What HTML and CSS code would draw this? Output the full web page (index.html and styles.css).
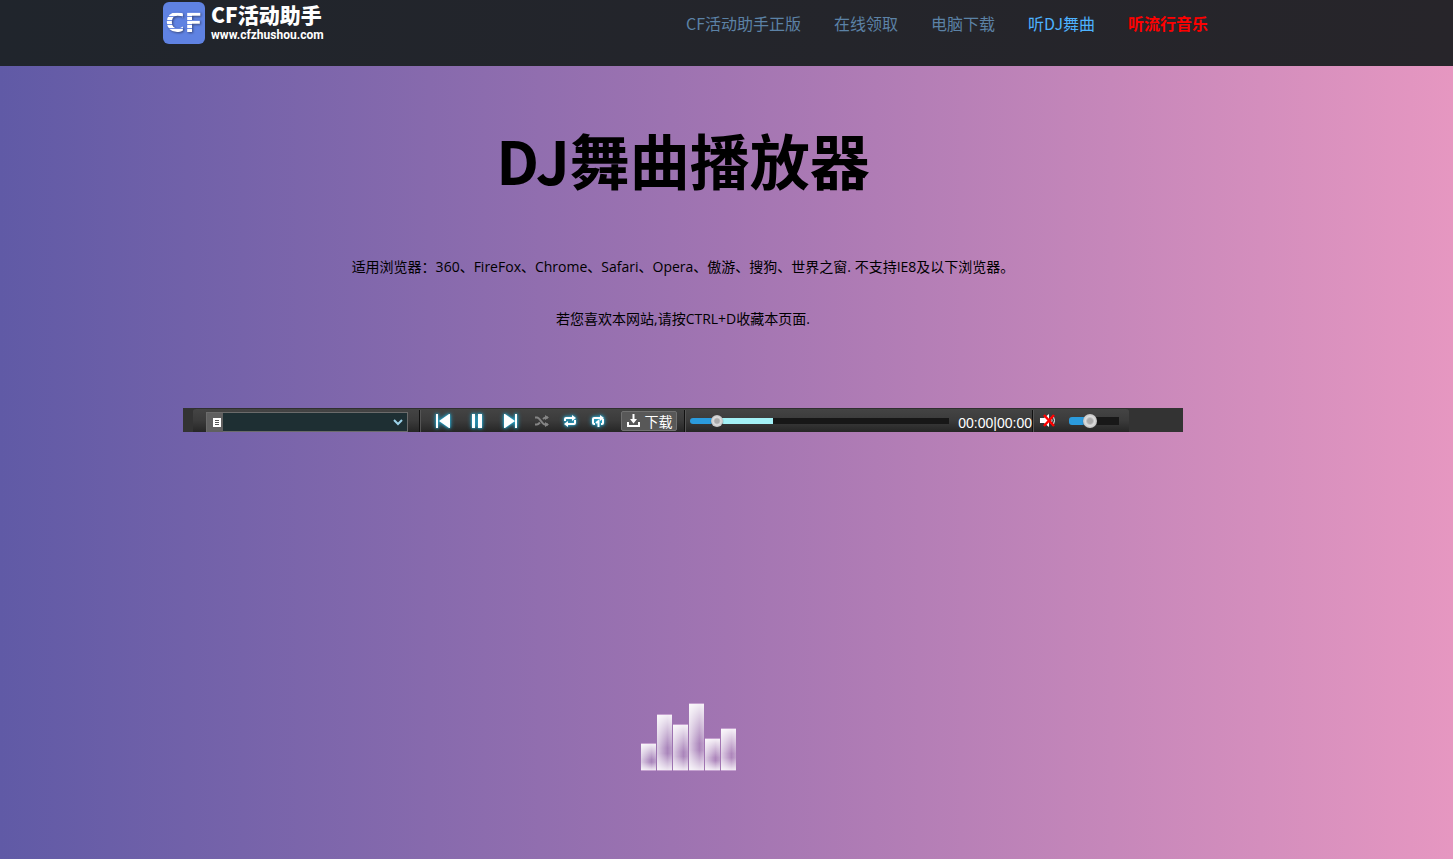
FILE: index.html
```html
<!DOCTYPE html>
<html lang="zh-CN">
<head>
<meta charset="utf-8">
<title>DJ舞曲播放器</title>
<link rel="stylesheet" href="styles.css">
</head>
<body>
<header class="header">
  <div class="header-inner">
    <a class="logo" href="#">
      <span class="logo-badge"><span class="logo-mark">CF</span></span>
      <span class="logo-words"><span class="logo-name">CF活动助手</span><span class="logo-url">www.cfzhushou.com</span></span>
    </a>
    <nav class="nav">
      <a href="#">CF活动助手正版</a>
      <a href="#">在线领取</a>
      <a href="#">电脑下载</a>
      <a href="#" class="active">听DJ舞曲</a>
      <a href="#" class="hot">听流行音乐</a>
    </nav>
  </div>
</header>
<main class="main">
  <h1 class="title">DJ舞曲播放器</h1>
  <p class="note">适用浏览器：360、FireFox、Chrome、Safari、Opera、傲游、搜狗、世界之窗. 不支持IE8及以下浏览器。</p>
  <p class="note">若您喜欢本网站,请按CTRL+D收藏本页面.</p>
  <section class="player" aria-label="播放器">
    <div class="player-bar">
      <div class="playlist">
        <svg class="list-icon" width="16" height="19" viewBox="0 0 16 19" aria-hidden="true"><path fill="#fff" d="M6 5h8v9H6z"/><path stroke="#555" d="M8 7.500h4M8 9.500h4M8 11.500h4"/></svg>
        <select class="playlist-select" aria-label="播放列表"><option></option></select>
        <svg class="chevron" width="10" height="7" viewBox="0 0 10 7" aria-hidden="true"><path d="M1 1l4 4 4-4" fill="none" stroke="#9cd3ea" stroke-width="2"/></svg>
      </div>
      <span class="divider"></span>
      <div class="controls">
        <button class="ctl" aria-label="上一首"><svg class="glow" width="16" height="16" viewBox="0 0 16 16"><path fill="#fff" d="M1 1h2v14H1zM15 1v14h-1L4 8l10-7z"/></svg></button>
        <button class="ctl" aria-label="暂停"><svg class="glow" width="16" height="16" viewBox="0 0 16 16"><path fill="#fff" d="M3 1h3v14H3zM9 1h4v14H9z"/></svg></button>
        <button class="ctl" aria-label="下一首"><svg class="glow" width="16" height="16" viewBox="0 0 16 16"><path fill="#fff" d="M12 1h2v14h-2zM1 1v14h1l10-7L2 1z"/></svg></button>
        <button class="ctl mode" aria-label="随机播放"><svg width="16" height="12" viewBox="0 0 16 12"><g fill="none" stroke="#858585" stroke-width="2"><path d="M1 2.500h2c3 0 5 7 8 7h3M1 9.500h2c1 0 2-1 3-2M9 4c1-1 1.500-1.500 3-1.500h2"/></g><path fill="#858585" d="M11 0l4 2.500L11 5zM11 7l4 2.500-4 2.500z"/></svg></button>
        <button class="ctl mode" aria-label="列表循环"><svg class="glow" width="14" height="12" viewBox="0 0 14 12"><g fill="none" stroke="#fff" stroke-width="2"><path d="M2 6V4q0-1 1-1h7M12 5v3q0 1-1 1H4"/></g><path fill="#fff" d="M9 0l4 3-4 3zM5 6L1 9l4 3z"/></svg></button>
        <button class="ctl mode" aria-label="单曲循环"><svg class="glow" width="14" height="12" viewBox="0 0 14 12"><g fill="none" stroke="#fff" stroke-width="2"><path d="M4 9H3Q2 9 2 8V4q0-1 1-1h7M12 4v4q0 1-1 1h-1M7.500 12V6L5 8"/></g><path fill="#fff" d="M9 0l4 3-4 3z"/></svg></button>
      </div>
      <button class="download"><svg width="15" height="14" viewBox="0 0 15 14" aria-hidden="true"><path fill="none" stroke="#fff" stroke-width="2" d="M2 8v4h11V8"/><path fill="#fff" d="M6.500 0h2v5H11L7.500 9.500 4 5h2.500z"/></svg>下载</button>
      <span class="divider divider-mid"></span>
      <input class="range progress" type="range" min="0" max="1000" value="85" aria-label="播放进度">
      <span class="time">00:00|00:00</span>
      <span class="divider divider-end"></span>
      <button class="mute" aria-label="静音"><svg width="16" height="15" viewBox="0 0 16 15"><path fill="#fff" d="M0 5h4l5-4v13l-5-4H0z"/><path fill="none" stroke="#fff" stroke-width="1" d="M11 4q2 3.500 0 7M13 2q3 5.500 0 11"/><path stroke="#f00" stroke-width="2.500" d="M4 2l10 11M14 2L4 13"/></svg></button>
      <input class="range volume" type="range" min="0" max="100" value="39" aria-label="音量">
    </div>
  </section>
  <div class="spectrum" aria-hidden="true">
    <i class="b1"></i><i class="b2"></i><i class="b3"></i><i class="b4"></i><i class="b5"></i><i class="b6"></i>
  </div>
</main>
</body>
</html>
```

FILE: styles.css
```css
* { box-sizing: border-box; }
body {
  margin: 0;
  min-height: 100vh;
  font-family: "Noto Sans CJK SC", sans-serif;
  color: #000;
  background: linear-gradient(90deg, #605aa6, #a275b2 50%, #e697c1);
}
a { text-decoration: none; }
button { border: 0; padding: 0; background: none; font: inherit; color: inherit; cursor: pointer; }
.header { height: 66px; background: linear-gradient(90deg, #20252c, #27252a); }
.header-inner {
  display: flex;
  justify-content: space-between;
  max-width: 1208px;
  padding-left: 163px;
}
.logo { display: flex; gap: 6px; padding-top: 2px; color: #fff; }
.logo-badge {
  display: flex;
  align-items: center;
  justify-content: center;
  width: 42px;
  height: 42px;
  border-radius: 6px;
  background: #5f82e2;
}
.logo-mark {
  font: bold 26px/28px "DejaVu Sans", sans-serif;
  background: repeating-linear-gradient(#fff 0 3px, #6f8de4 3px 4px);
  -webkit-background-clip: text;
  background-clip: text;
  color: transparent;
  filter: drop-shadow(1px 1px 1px #3a4a80);
}
.logo-words { display: flex; flex-direction: column; }
.logo-name { font-size: 21px; line-height: 25px; font-weight: 900; }
.logo-url { font: bold 12px/16px Roboto, sans-serif; }
.nav { display: flex; gap: 33px; padding-top: 11px; font-size: 16px; line-height: 24px; white-space: nowrap; }
.nav a { color: #5c82a6; }
.nav .active { color: #4db2ff; }
.nav .hot { color: #f00; font-weight: bold; }

.main {
  display: flex;
  flex-direction: column;
  align-items: center;
  max-width: 1366px;
}
.title { margin: 49px 0 54px; font-size: 60px; line-height: 88px; font-weight: bold; }
.note { margin: 0 0 32px; font-family: "Open Sans", "Noto Sans CJK SC", sans-serif; font-size: 14px; line-height: 20px; }
.player {
  width: 100%;
  max-width: 1000px;
  margin-top: 47px;
  padding-left: 10px;
  background: #333;
}
.player-bar {
  display: flex;
  align-items: center;
  max-width: 936px;
  height: 24px;
  padding: 0 10px 0 13px;
  border-top: 1px solid #303030;
  border-radius: 3px 3px 0 0;
  background: linear-gradient(#444, #3b3b3b 50%, #262626);
}
.playlist {
  position: relative;
  display: flex;
  align-self: flex-end;
  width: 202px;
  height: 20px;
  border: 1px solid #6b6b6b;
  background: #1e2f33;
}
.list-icon { flex: none; background: #606060; }
.playlist-select { flex: 1; border: 0; appearance: none; background: transparent; color: #fff; }
.chevron { position: absolute; right: 4px; top: 6px; pointer-events: none; }
.divider {
  flex: none;
  width: 2px;
  height: 22px;
  margin: 0 5px 0 11px;
  background: linear-gradient(90deg, #111 50%, #555 50%);
}
.divider-mid { margin: 0 4px 0 7px; }
.divider-end { margin: 0 6px 0 0; }
.controls { display: flex; margin-right: 9px; }
.ctl { display: flex; align-items: center; justify-content: center; width: 34px; height: 22px; }
.mode { width: 28px; }
.glow { filter: drop-shadow(0 0 1px #25b2da) drop-shadow(0 0 2px #25a2ca); overflow: visible; }
.download {
  display: flex;
  align-items: center;
  justify-content: center;
  gap: 4px;
  width: 56px;
  height: 20px;
  border: 1px solid #707070;
  border-radius: 2px;
  background: #585858;
  color: #fff;
  font-size: 14px;
  line-height: 16px;
  white-space: nowrap;
}
.range { appearance: none; margin: 0; height: 14px; background: transparent; }
.progress { flex: 1; min-width: 0; }
.range::-webkit-slider-runnable-track { height: 6px; border-radius: 3px 0 0 3px; }
.progress::-webkit-slider-runnable-track {
  background: linear-gradient(90deg, #2b9bdd 10%, #a3f1f6 10% 32%, #171717 32%);
}
.volume { width: 50px; }
.volume::-webkit-slider-runnable-track {
  height: 8px;
  background: linear-gradient(90deg, #2b9bdd 40%, #181818 40%);
}
.range::-webkit-slider-thumb {
  appearance: none;
  width: 12px;
  height: 12px;
  margin-top: -3px;
  border-radius: 50%;
  background: radial-gradient(#aaa 0 25%, #ddd 45%, #bbb 75%);
  box-shadow: 0 1px 1px #333;
}
.volume::-webkit-slider-thumb { width: 14px; height: 14px; }
.time { width: 76px; margin-left: 7px; padding-top: 4px; color: #fff; font: 14px/18px "Liberation Sans", sans-serif; text-align: right; white-space: nowrap; }
.mute { display: flex; margin-right: 13px; }

.spectrum {
  display: flex;
  align-items: flex-end;
  gap: 1px;
  height: 68px;
  margin: 271px 0 0 10px;
}
.spectrum i {
  width: 15px;
  border: solid #c4a0cf;
  border-width: 1px 0;
  background:
    linear-gradient(#fffd, #fff0 60%, #fff0 70%, #fffc),
    linear-gradient(90deg, #fffa, #fff2 70%, #fff5);
}
.b1 { height: 28px; }
.b2 { height: 57px; }
.b3 { height: 47px; }
.b4 { height: 68px; }
.b5 { height: 33px; }
.b6 { height: 43px; }
```
